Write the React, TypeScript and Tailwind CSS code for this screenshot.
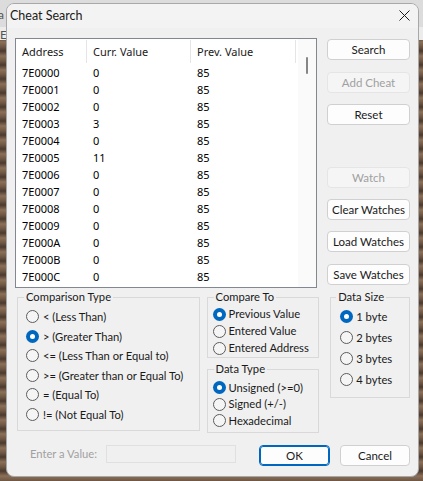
import React from "react";

const BODY = "font-['Lato',sans-serif]";
const LIST = "font-['Noto_Sans',sans-serif]";

function Radio({ checked }: { checked?: boolean }) {
  return checked ? (
    <span className="w-[13px] h-[13px] rounded-full bg-[#0067c0] flex items-center justify-center shrink-0">
      <span className="w-[5px] h-[5px] rounded-full bg-white" />
    </span>
  ) : (
    <span className="w-[13px] h-[13px] rounded-full border border-[#5c5c5c] bg-[#f5f5f5] shrink-0" />
  );
}

function RadioRow({
  label,
  checked,
  h,
  gap,
}: {
  label: string;
  checked?: boolean;
  h: string;
  gap: string;
}) {
  return (
    <div className={`flex items-center ${h} ${gap} text-[11.2px] text-[#1a1a1a] leading-none whitespace-nowrap`}>
      <Radio checked={checked} />
      <span>{label}</span>
    </div>
  );
}

function Group({
  title,
  className,
  labelLeft,
  children,
}: {
  title: string;
  className: string;
  labelLeft: string;
  children: React.ReactNode;
}) {
  return (
    <div className={`relative border border-[#d9d9d9] ${className}`}>
      <span
        className={`absolute top-[-8px] ${labelLeft} px-[2px] bg-[#f0f0f0] text-[11.2px] leading-[14px] text-[#1a1a1a] whitespace-nowrap`}
      >
        {title}
      </span>
      {children}
    </div>
  );
}

function Btn({
  label,
  disabled,
  className,
}: {
  label: string;
  disabled?: boolean;
  className: string;
}) {
  return (
    <div
      className={`h-[21px] flex items-center justify-center rounded-[4px] text-[11.5px] leading-none whitespace-nowrap ${
        disabled
          ? "bg-[#f5f5f5] border border-[#e5e5e5] text-[#a0a0a0]"
          : "bg-[#fdfdfd] border border-[#d0d0d0] text-[#1a1a1a]"
      } ${className}`}
    >
      {label}
    </div>
  );
}

const rows: [string, string, string][] = [
  ["7E0000", "0", "85"],
  ["7E0001", "0", "85"],
  ["7E0002", "0", "85"],
  ["7E0003", "3", "85"],
  ["7E0004", "0", "85"],
  ["7E0005", "11", "85"],
  ["7E0006", "0", "85"],
  ["7E0007", "0", "85"],
  ["7E0008", "0", "85"],
  ["7E0009", "0", "85"],
  ["7E000A", "0", "85"],
  ["7E000B", "0", "85"],
  ["7E000C", "0", "85"],
];

export default function App() {
  return (
    <div className={`relative w-[423px] h-[481px] overflow-hidden ${BODY}`}>
      {/* background behind the dialog */}
      <div className="flex flex-col h-full">
        <div className="h-[27px] bg-[#dcdcdc] text-[12px] text-[#555] leading-none pt-[9px]">
          <span className="ml-[-2px]">a</span>
        </div>
        <div className="h-[13px] bg-[#ececec] text-[12px] text-[#555] leading-none pt-[2px]">
          <span>Er</span>
        </div>
        <div className="flex-1 bg-[repeating-linear-gradient(0deg,#6d5643_0px,#8b7058_5px,#4a3a2e_10px,#6d5643_14px)]" />
      </div>

      {/* dialog window */}
      <div className="absolute left-[6px] top-[3px] w-[413px] h-[474px] rounded-[8px] border border-[#a8a8a8] bg-[#f0f0f0] flex flex-col overflow-hidden">
        {/* title bar */}
        <div className="h-[24px] flex items-center justify-between pl-[3px] pr-[8px] bg-[#f3f3f3]">
          <span className="text-[12.5px] leading-none text-[#1a1a1a]">Cheat Search</span>
          <svg width="11" height="11" viewBox="0 0 11 11" className="mt-[-2px]">
            <path d="M0.5 0.5 L10.5 10.5 M10.5 0.5 L0.5 10.5" stroke="#1a1a1a" strokeWidth="1" />
          </svg>
        </div>

        <div className="px-[8px] pt-[10px] flex flex-col">
          {/* top section */}
          <div className="flex gap-[10px]">
            <div className={`w-[302px] h-[250px] border border-[#828790] bg-white flex ${LIST}`}>
              <div className="w-[282px] flex flex-col">
                <div className="h-[25px] flex text-[11px] text-[#1a1a1a] leading-none">
                  <div className="w-[71px] flex items-center pl-[6px] border-r border-[#e5e5e5] my-[1px]">Address</div>
                  <div className="w-[104px] flex items-center pl-[6px] border-r border-[#e5e5e5] my-[1px]">Curr. Value</div>
                  <div className="w-[105px] flex items-center pl-[6px] border-r border-[#e5e5e5] my-[1px]">Prev. Value</div>
                </div>
                {rows.map((r) => (
                  <div key={r[0]} className="h-[17px] flex items-center text-[11px] text-black leading-none">
                    <div className="w-[71px] pl-[6px]">{r[0]}</div>
                    <div className="w-[104px] pl-[6px]">{r[1]}</div>
                    <div className="w-[105px] pl-[6px]">{r[2]}</div>
                  </div>
                ))}
              </div>
              <div className="w-[18px] bg-[#fafafa] flex justify-center pt-[18px] ml-auto">
                <div className="w-[2px] h-[17px] rounded-full bg-[#868686]" />
              </div>
            </div>

            <div className="w-[84px] flex flex-col">
              <Btn label="Search" className="mt-[1px]" />
              <Btn label="Add Cheat" disabled className="mt-[12px]" />
              <Btn label="Reset" className="mt-[11px]" />
              <Btn label="Watch" disabled className="mt-[42px]" />
              <Btn label="Clear Watches" className="mt-[11px]" />
              <Btn label="Load Watches" className="mt-[11px]" />
              <Btn label="Save Watches" className="mt-[12px]" />
            </div>
          </div>

          {/* group boxes */}
          <div className="flex items-start mt-[9px] ml-[2px]">
            <Group title="Comparison Type" labelLeft="left-[6px]" className="w-[183px] h-[134px] pl-[8px] pt-[9px]">
              <RadioRow label="< (Less Than)" h="h-[19.5px]" gap="gap-[4px]" />
              <RadioRow label="> (Greater Than)" checked h="h-[19.5px]" gap="gap-[4px]" />
              <RadioRow label="<= (Less Than or Equal to)" h="h-[19.5px]" gap="gap-[4px]" />
              <div className="overflow-hidden w-[158px]">
                <RadioRow label=">= (Greater than or Equal To)" h="h-[19.5px]" gap="gap-[4px]" />
              </div>
              <RadioRow label="= (Equal To)" h="h-[19.5px]" gap="gap-[4px]" />
              <RadioRow label="!= (Not Equal To)" h="h-[19.5px]" gap="gap-[4px]" />
            </Group>

            <div className="ml-[7px] w-[113px] flex flex-col">
              <Group title="Compare To" labelLeft="left-[6px]" className="h-[61px] pl-[5px] pt-[7.5px]">
                <RadioRow label="Previous Value" checked h="h-[17px]" gap="gap-[3px]" />
                <RadioRow label="Entered Value" h="h-[17px]" gap="gap-[3px]" />
                <RadioRow label="Entered Address" h="h-[17px]" gap="gap-[3px]" />
              </Group>
              <Group title="Data Type" labelLeft="left-[6px]" className="mt-[11px] h-[64px] pl-[5px] pt-[9px]">
                <RadioRow label="Unsigned (>=0)" checked h="h-[16.7px]" gap="gap-[3px]" />
                <RadioRow label="Signed (+/-)" h="h-[16.7px]" gap="gap-[3px]" />
                <RadioRow label="Hexadecimal" h="h-[16.7px]" gap="gap-[3px]" />
              </Group>
            </div>

            <Group title="Data Size" labelLeft="left-[5px]" className="ml-[11px] w-[80px] h-[101px] pl-[9px] pt-[8px]">
              <RadioRow label="1 byte" checked h="h-[21px]" gap="gap-[3px]" />
              <RadioRow label="2 bytes" h="h-[21px]" gap="gap-[3px]" />
              <RadioRow label="3 bytes" h="h-[21px]" gap="gap-[3px]" />
              <RadioRow label="4 bytes" h="h-[21px]" gap="gap-[3px]" />
            </Group>
          </div>

          {/* bottom row */}
          <div className="flex items-start mt-[12px]">
            <div className="ml-[15px] w-[76px] h-[18px] flex items-center text-[11.2px] leading-none text-[#a0a0a0] whitespace-nowrap">
              Enter a Value:
            </div>
            <div className="w-[130px] h-[18px] border border-[#e0e0e0] bg-[#f0f0f0]" />
            <div className="ml-[23px] w-[71px] h-[21px] rounded-[4px] border border-[#0067c0] outline outline-1 outline-[#0067c0] outline-offset-[-2px] bg-[#fdfdfd] flex items-center justify-center text-[11.5px] leading-none text-[#1a1a1a]">
              OK
            </div>
            <div className="ml-[10px] w-[70px] h-[21px] rounded-[4px] border border-[#d0d0d0] bg-[#fdfdfd] flex items-center justify-center text-[11.5px] leading-none text-[#1a1a1a]">
              Cancel
            </div>
          </div>
        </div>
      </div>
    </div>
  );
}
